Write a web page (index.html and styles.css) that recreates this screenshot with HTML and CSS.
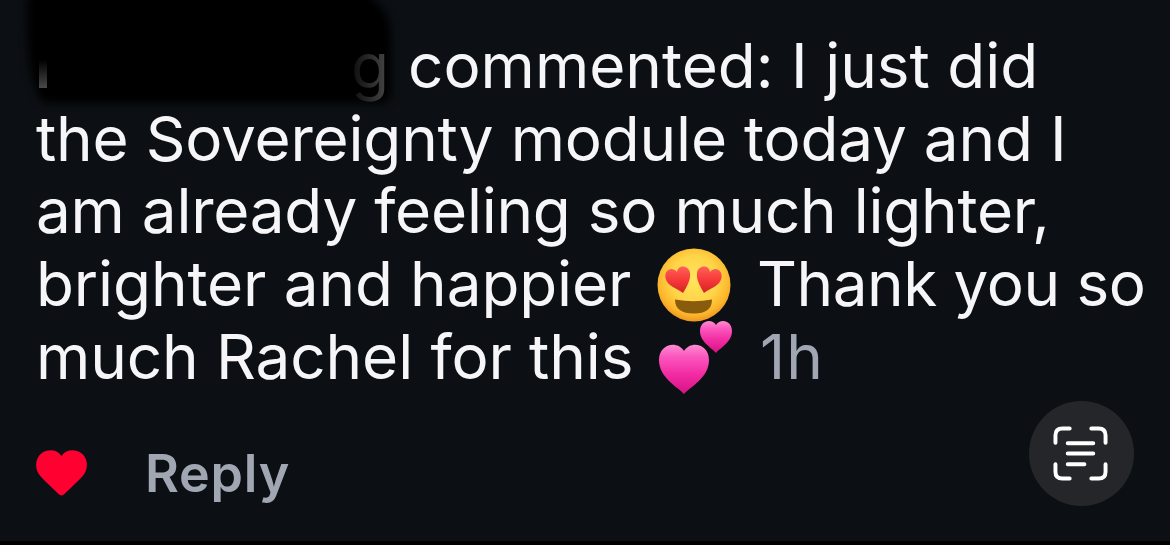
FILE: index.html
```html
<!DOCTYPE html>
<html lang="en">
<head>
<meta charset="UTF-8">
<meta name="viewport" content="width=device-width, initial-scale=1">
<title>Comment</title>
<link rel="stylesheet" href="styles.css">
</head>
<body>

<div class="comment">
	<div class="text">
		<div class="line line1"><span class="user"><span class="marker"></span><span class="stem"></span><span class="last">g</span></span><span>commented: I just did</span></div>
		<div class="line line2">the Sovereignty module today and I</div>
		<div class="line line3">am already feeling so much lighter,</div>
		<div class="line line4"><span class="start">brighter and happier</span>
			<svg class="emoji" viewBox="0 0 76 76" role="img" aria-label="heart eyes">
				<defs>
					<radialGradient id="face" cx="50%" cy="42%" r="58%">
						<stop offset="0" stop-color="#ffe45c"/>
						<stop offset="0.55" stop-color="#ffd448"/>
						<stop offset="0.85" stop-color="#fcb52b"/>
						<stop offset="1" stop-color="#ee9520"/>
					</radialGradient>
					<linearGradient id="eye" x1="0" y1="0" x2="0" y2="1">
						<stop offset="0" stop-color="#ff6257"/>
						<stop offset="0.5" stop-color="#f63a39"/>
						<stop offset="1" stop-color="#d62127"/>
					</linearGradient>
				</defs>
				<circle cx="38" cy="38" r="36.5" fill="url(#face)"/>
				<path fill="url(#eye)" d="M27 46C22 42 11 39 9.500 31C8 23 16 19 21 25C22 17 33 18 34 26C35 33 30 41 27 46Z"/>
				<path fill="url(#eye)" d="M48 46C53 42 64 39 65.500 31C67 23 59 19 54 25C53 17 42 18 41 26C40 33 45 41 48 46Z"/>
				<path fill="#885b0d" d="M19 52.500Q38 56 56 52.500Q56 66.500 38 66.500Q19 66.500 19 52.500Z"/>
			</svg>
			<span class="thanks">Thank you so</span></div>
		<div class="line line5"><span class="start">much Rachel for this</span>
			<svg class="emoji" viewBox="0 0 76 76" role="img" aria-label="two hearts">
				<defs>
					<linearGradient id="pink" x1="0" y1="0" x2="0" y2="1">
						<stop offset="0" stop-color="#ff8bd3"/>
						<stop offset="0.25" stop-color="#fb56bd"/>
						<stop offset="0.6" stop-color="#f22ba3"/>
						<stop offset="1" stop-color="#d81383"/>
					</linearGradient>
				</defs>
				<path fill="url(#pink)" d="M28 74C22 67 3 58 3 40C3 24 21 20 28 31C35 20 53 24 53 40C53 58 34 67 28 74Z"/>
				<path fill="url(#pink)" d="M60 33C56 28 44 22 44 11C44 0 56 -2 60 5C64 -2 76 0 76 11C76 22 64 28 60 33Z"/>
			</svg>
			<span class="time">1h</span></div>
	</div>

	<div class="actions">
		<svg class="like" viewBox="0 0 54 48" role="img" aria-label="liked">
			<path fill="#ff0030" d="M27 6C32 -1 41 -1 47 3C54 8 55 19 49 26C45 31 37 38 30 45Q27 48 24 45C17 38 9 31 5 26C-1 19 0 8 7 3C13 -1 22 -1 27 6Z"/>
		</svg>
		<span class="reply">Reply</span>
		<button class="scan" aria-label="Scan text">
			<svg viewBox="0 0 56 56" fill="none" stroke="#fff" stroke-linecap="round">
				<path stroke-width="4" d="M2.500 17V9.500Q2.500 2.500 9.500 2.500H17M39 2.500H46.500Q53.500 2.500 53.500 9.500V17M53.500 39V46.500Q53.500 53.500 46.500 53.500H39M17 53.500H9.500Q2.500 53.500 2.500 46.500V39"/>
				<path stroke-width="4" d="M15 17.500H41M15 28H41M15 39H32"/>
			</svg>
		</button>
	</div>
</div>

</body>
</html>
```
FILE: styles.css
```css
* {
	box-sizing: border-box;
}

body {
	margin: 0;
	background-color: #0c1014;
	font-family: Inter, "Liberation Sans", sans-serif;
}

.comment {
	height: 545px;
	padding: 30px 0 0 36px;
	border-bottom: 4px solid #000;
	overflow: hidden;
}

.text {
	color: #f6f6f9;
	font-size: 62px;
	line-height: 72.7px;
}

.line {
	display: flex;
	height: 72.7px;
	white-space: nowrap;
}

.line2 {
	letter-spacing: -0.2px;
}

.line3 {
	letter-spacing: -0.24px;
}

.user {
	position: relative;
	width: 372px;
	flex: none;
}

/* brushed-out name, spills over the top of the line */
.marker {
	position: absolute;
	left: -9px;
	top: -46px;
	width: 364px;
	height: 119px;
	background-color: #000;
	border-radius: 20px 60px 10px 20px / 20px 50px 10px 80px;
	filter: blur(4px);
}

.stem {
	position: absolute;
	left: 3px;
	top: 30px;
	width: 8px;
	height: 28px;
	background: linear-gradient(transparent, #484848);
}

.last {
	position: absolute;
	right: 19px;
	top: 0;
	color: transparent;
	background: linear-gradient(90deg, #0c0c0c, #484848);
	background-clip: text;
	-webkit-background-clip: text;
}

.start {
	width: 620px;
	flex: none;
	letter-spacing: -0.1px;
}

.emoji {
	width: 76px;
	height: 76px;
	margin: -1px 28px 0 0;
	flex: none;
}

.thanks {
	margin-left: -3px;
	letter-spacing: -0.5px;
}

.time {
	color: #a1a6b3;
	letter-spacing: 1px;
}

.actions {
	display: flex;
	align-items: center;
	height: 104px;
	margin-top: 8px;
}

.like {
	width: 53px;
	height: 47px;
	margin: 41px 57px 0 -1px;
}

.reply {
	color: #a1a6b3;
	font-size: 52px;
	font-weight: 600;
	letter-spacing: 0.8px;
	margin-top: 40px;
}

.scan {
	display: flex;
	align-items: center;
	justify-content: center;
	width: 105px;
	height: 105px;
	margin: 0 36px 0 auto;
	padding: 1px 2px 0 0;
	border: none;
	border-radius: 50%;
	background-color: #25262a;
}

.scan svg {
	width: 55px;
	height: 55px;
}
```
